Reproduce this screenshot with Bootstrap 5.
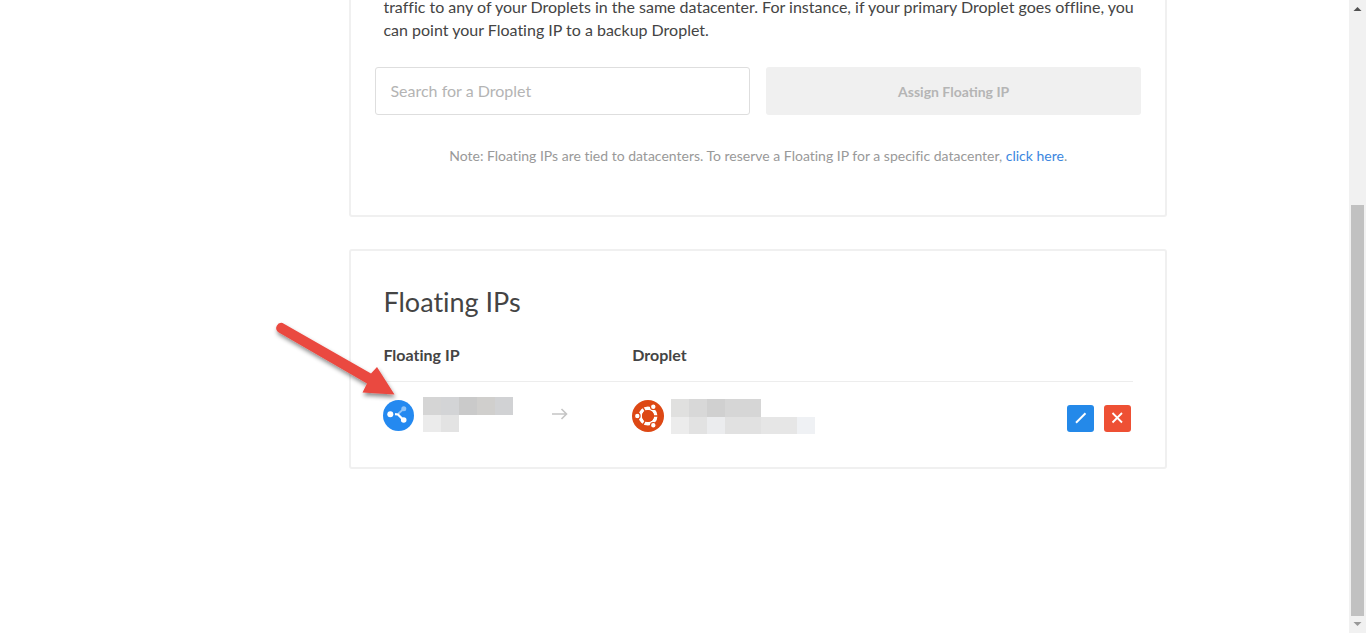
<!DOCTYPE html>
<html lang="en">
<head>
<meta charset="utf-8">
<meta name="viewport" content="width=device-width, initial-scale=1">
<title>Floating IPs</title>
<link href="https://cdn.jsdelivr.net/npm/bootstrap@5.3.0/dist/css/bootstrap.min.css" rel="stylesheet">
<style>
  body { font-family: Lato, "Liberation Sans", sans-serif; font-size: 16px; line-height: 23px; font-variant-ligatures: none; color: #444; background: #fff; }
  .page { max-width: 985px; }
  .side-space { flex: 0 0 17%; }
  .panel { border: 2px solid #f0f0f0; border-radius: 3px; padding: 32px; background: #fff; }
  .assign-panel { margin-top: -5px; border-top: 0; padding-top: 0; padding-bottom: 50px; }
  .ips-panel { margin-top: 32px; }
  .intro { margin: 0 -8px 0 0; }
  .assign-form { margin: 26px -8px 0; }
  .tall { height: 48px; border-radius: 3px; }
  .search { border: 1px solid #dedede; padding: 0 14px 2px; font-size: 16px; color: #444; }
  .search::placeholder { color: #b4b4b4; opacity: 1; }
  .assign, .assign:disabled { background: #f0f0f0; border: 0; color: #b5b5b5; font-size: 14px; font-weight: 700; opacity: 1; }
  .note { font-size: 14px; line-height: 18px; color: #999; }
  .note a { color: #3b86e0; text-decoration: none; }
  .title { font-size: 27px; line-height: 38px; font-weight: 400; color: #444; margin-bottom: 17px; }
  .ips { table-layout: fixed; color: #444; }
  .ips th { font-size: 16px; font-weight: 700; line-height: 34px; padding: 0 0 9px; border-bottom: 1px solid #ededed; }
  .ips td { padding: 15px 0 1px; }
  .ips svg { display: block; flex: none; }
  .col-ip, .col-drop { width: 33.2%; }
  .ip-cell { gap: 9px; }
  .drop-cell { gap: 7px; }
  .actions { gap: 10px; padding: 5px 2px 0 0; }
  .square { width: 27px; height: 27px; border: 0; border-radius: 3px; padding: 0; }
  .edit { background: #2489e9; }
  .remove { background: #ee5034; }
  .pointer { position: absolute; left: -113px; top: -82px; pointer-events: none; }
  .scroll { flex: 0 0 17px; background: #f1f1f1; }
  .scroll-before { flex: 188 0 0; }
  .scroll-thumb { flex: 411 0 0; background: #c1c1c1; margin: 0 2px; }
</style>
</head>
<body>
<div class="d-flex vh-100 overflow-hidden">
  <div class="flex-grow-1">
    <div class="page d-flex mx-auto">
      <div class="side-space"></div>
      <main class="flex-grow-1">
        <section class="panel assign-panel">
          <p class="intro">traffic to any of your Droplets in the same datacenter. For instance, if your primary Droplet goes offline, you can point your Floating IP to a backup Droplet.</p>
          <form class="assign-form d-flex gap-3">
            <input class="form-control tall search w-50" type="text" placeholder="Search for a Droplet" aria-label="Search for a Droplet">
            <button class="btn tall assign w-50" type="submit" disabled>Assign Floating IP</button>
          </form>
          <p class="note text-center mt-4 pt-2 mb-0">Note: Floating IPs are tied to datacenters. To reserve a Floating IP for a specific datacenter, <a href="#">click here</a>.</p>
        </section>

        <section class="panel ips-panel">
          <h2 class="title">Floating IPs</h2>
          <table class="ips w-100">
            <colgroup><col class="col-ip"><col class="col-drop"><col></colgroup>
            <thead>
              <tr><th scope="col">Floating IP</th><th scope="col">Droplet</th><th aria-label="Actions"></th></tr>
            </thead>
            <tbody>
              <tr>
                <td>
                  <div class="ip-cell d-flex align-items-center">
                    <div class="position-relative">
                      <svg width="31" height="31" viewBox="0 0 31 31">
                        <circle cx="15.5" cy="15.5" r="15.5" fill="#2489f0"/>
                        <path d="M15 14L20.5 9" stroke="#8fc3f8" stroke-width="1.8"/><circle cx="20.8" cy="8.8" r="2.5" fill="#8fc3f8"/>
                        <path d="M12 14.2L15 14.5L20.5 20" fill="none" stroke="#fff" stroke-width="2.2"/><circle cx="7.3" cy="14.2" r="3" fill="#fff"/><circle cx="20.7" cy="20" r="2.8" fill="#fff"/>
                      </svg>
                      <svg class="pointer" width="134" height="90" viewBox="0 0 134 90">
                        <defs><filter id="soft" x="-20%" y="-20%" width="150%" height="150%"><feDropShadow dx="1" dy="3" stdDeviation="2" flood-color="#000" flood-opacity=".45"/></filter></defs>
                        <path filter="url(#soft)" fill="#ea4840" d="M12.5 5L101 55.5L107 49L124.5 76.5L92.5 74.5L97 65.5L8 14A5.2 5.2 0 0 1 12.5 5Z"/>
                      </svg>
                    </div>
                    <svg width="90" height="37" viewBox="0 0 90 37" shape-rendering="crispEdges">
                      <path fill="#d5d5d5" d="M0 0h18v18H0z"/><path fill="#d3d4d6" d="M18 0h18v18H18z"/><path fill="#cacaca" d="M36 0h18v18H36z"/><path fill="#d0cfcd" d="M54 0h18v18H54z"/><path fill="#d1d2d4" d="M72 0h18v18H72z"/>
                      <path fill="#ebebeb" d="M0 18h18v17H0z"/><path fill="#e3e3e3" d="M18 18h18v17H18z"/>
                    </svg>
                    <svg class="ms-4" width="24" height="37" viewBox="-5 0 24 37" fill="none" stroke="#c5c5c5" stroke-width="1.6"><path d="M1 17h15M10.5 12l5 5l-5 5"/></svg>
                  </div>
                </td>
                <td>
                  <div class="drop-cell d-flex align-items-center">
                    <svg width="32" height="32" viewBox="0 0 32 32">
                      <circle cx="16" cy="16" r="16" fill="#dd4814"/>
                      <circle cx="16" cy="16" r="7.8" fill="none" stroke="#fff" stroke-width="3.4"/>
                      <path d="M16 16L26 16M16 16L10.5 6.5M16 16L10.5 25.5" stroke="#dd4814" stroke-width="1.4"/>
                      <circle cx="16" cy="16" r="6" fill="#dd4814"/>
                      <g fill="#fff" stroke="#dd4814" stroke-width="1.2"><circle cx="5.3" cy="16" r="2.8"/><circle cx="21.3" cy="6.7" r="2.8"/><circle cx="21.3" cy="25.3" r="2.8"/></g>
                    </svg>
                    <svg width="144" height="37" viewBox="0 -2 144 37" shape-rendering="crispEdges">
                      <path fill="#e0e0df" d="M0 0h18v18H0z"/><path fill="#d8d8d8" d="M18 0h18v18H18z"/><path fill="#d0d0d0" d="M36 0h18v18H36z"/><path fill="#d6d6d6" d="M54 0h36v18H54z"/>
                      <path fill="#ececec" d="M0 18h18v17H0z"/><path fill="#e2e2e2" d="M18 18h18v17H18z"/><path fill="#ebecee" d="M36 18h18v17H36z"/><path fill="#e1e1e1" d="M54 18h36v17H54z"/><path fill="#e6e6e6" d="M90 18h36v17H90z"/><path fill="#eff1f4" d="M126 18h18v17h-18z"/>
                    </svg>
                  </div>
                </td>
                <td>
                  <div class="d-flex justify-content-end actions">
                    <button class="square edit" type="button" aria-label="Edit"><svg width="27" height="27" viewBox="0 0 27 27"><path d="M9 17.8L18.5 8.3" stroke="#fff" stroke-width="2"/></svg></button>
                    <button class="square remove" type="button" aria-label="Remove"><svg width="27" height="27" viewBox="0 0 27 27"><path d="M8.5 8L18 17.5M18 8L8.5 17.5" stroke="#fff" stroke-width="1.8"/></svg></button>
                  </div>
                </td>
              </tr>
            </tbody>
          </table>
        </section>
      </main>
    </div>
  </div>
  <div class="scroll d-flex flex-column" aria-hidden="true">
    <svg width="17" height="17" viewBox="0 0 17 17"><path d="M4.5 11L8.5 7L12.5 11Z" fill="#505050"/></svg>
    <div class="scroll-before"></div>
    <div class="scroll-thumb"></div>
    <svg width="17" height="17" viewBox="0 0 17 17"><path d="M4.5 6L8.5 10L12.5 6Z" fill="#999"/></svg>
  </div>
</div>
<script src="https://cdn.jsdelivr.net/npm/bootstrap@5.3.0/dist/js/bootstrap.bundle.min.js"></script>
</body>
</html>
